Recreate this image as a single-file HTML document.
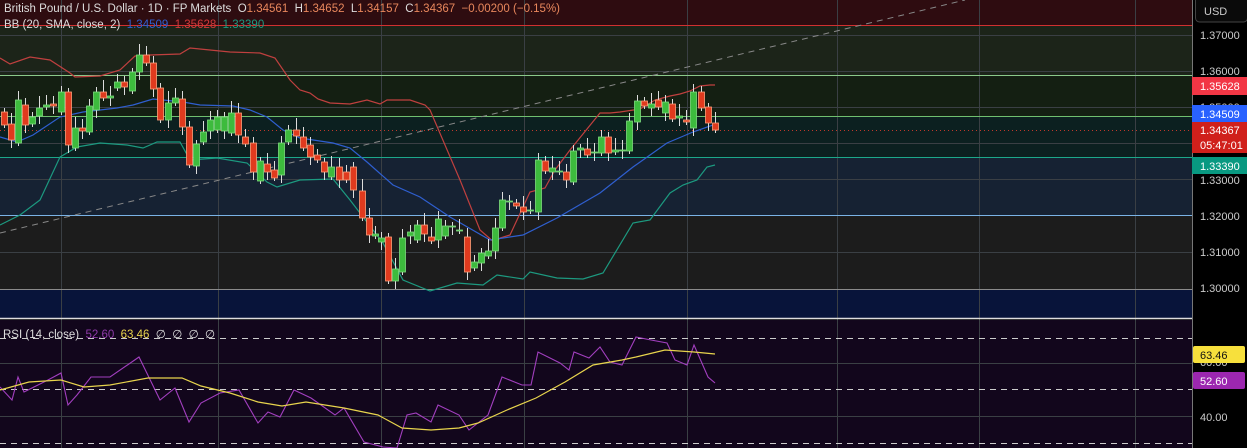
<!DOCTYPE html><html><head><meta charset="utf-8"><style>
html,body{margin:0;padding:0;background:#000;width:1247px;height:448px;overflow:hidden;font-family:"Liberation Sans",sans-serif}
svg{display:block}
text{white-space:pre}
</style></head><body>
<svg id="s" width="1247" height="448" xmlns="http://www.w3.org/2000/svg" font-family="Liberation Sans, sans-serif" xml:space="preserve">
<rect x="0" y="0" width="1192" height="25" fill="#2e0c10"/>
<rect x="0" y="25" width="1192" height="50" fill="#1c2419"/>
<rect x="0" y="75" width="1192" height="42" fill="#141f12"/>
<rect x="0" y="117" width="1192" height="40" fill="#0c2020"/>
<rect x="0" y="157" width="1192" height="58" fill="#162233"/>
<rect x="0" y="215" width="1192" height="74" fill="#1c1c1c"/>
<rect x="0" y="289" width="1192" height="29" fill="#08143a"/>
<rect x="0" y="320" width="1192" height="128" fill="#12061c"/>
<g stroke="#3a3f44" stroke-width="1">
<line x1="0" y1="35.5" x2="1192" y2="35.5"/><line x1="0" y1="71.5" x2="1192" y2="71.5"/><line x1="0" y1="107.5" x2="1192" y2="107.5"/><line x1="0" y1="143.5" x2="1192" y2="143.5"/><line x1="0" y1="179.5" x2="1192" y2="179.5"/><line x1="0" y1="252.5" x2="1192" y2="252.5"/>
<line x1="61.5" y1="0" x2="61.5" y2="448"/><line x1="218.5" y1="0" x2="218.5" y2="448"/><line x1="381.5" y1="0" x2="381.5" y2="448"/><line x1="524.5" y1="0" x2="524.5" y2="448"/><line x1="687.5" y1="0" x2="687.5" y2="448"/><line x1="837.5" y1="0" x2="837.5" y2="448"/><line x1="979.5" y1="0" x2="979.5" y2="448"/><line x1="1135.5" y1="0" x2="1135.5" y2="448"/>
<line x1="0" y1="363.5" x2="1192" y2="363.5"/><line x1="0" y1="416.5" x2="1192" y2="416.5"/>
</g>
<line x1="0" y1="25.5" x2="1192" y2="25.5" stroke="#d13030"/>
<line x1="0" y1="75.5" x2="1192" y2="75.5" stroke="#8bc98b"/>
<line x1="0" y1="116.5" x2="1192" y2="116.5" stroke="#6fbf6f"/>
<line x1="0" y1="157.5" x2="1192" y2="157.5" stroke="#1ca88a"/>
<line x1="0" y1="215.5" x2="1192" y2="215.5" stroke="#7ab3e6"/>
<line x1="0" y1="289.5" x2="1192" y2="289.5" stroke="#8a8a8a"/>
<line x1="0" y1="233" x2="965" y2="0" stroke="#888" stroke-dasharray="6,5"/>
<line x1="0" y1="130.5" x2="1192" y2="130.5" stroke="#c0392b" stroke-dasharray="1,3"/>
<line x1="0" y1="318.5" x2="1247" y2="318.5" stroke="#ddd" stroke-width="1.5"/>
<g stroke="#ccc" stroke-dasharray="6,5"><line x1="0" y1="338.5" x2="1192" y2="338.5"/><line x1="0" y1="389.5" x2="1192" y2="389.5"/><line x1="0" y1="443.5" x2="1192" y2="443.5"/></g>
<polyline fill="none" stroke="#c0403f" stroke-width="1.2" points="0,58 10,64 30,57 50,60 70,73 75,77 100,76 120,70 135,56 150,55 180,54 190,48 230,52 260,53 275,58 290,80 300,90 310,93 318,99 330,103 350,104 367,100 380,104 387,100 410,100 425,105 430,110 460,180 480,230 495,243 500,238 510,235 530,192 545,188 555,170 570,150 600,113 610,113 620,112 640,109 655,100 670,96 680,94 690,91 700,86 710,85 715,85"/>
<polyline fill="none" stroke="#2f5fd0" stroke-width="1.2" points="0,137 17,142 33,135 60,117 83,112 100,110 117,108 133,105 153,99 183,102 200,105 233,106 250,110 267,117 283,130 300,138 333,143 350,148 367,162 393,185 420,197 450,217 490,240 523,235 557,218 600,193 633,167 667,143 693,132 713,125"/>
<polyline fill="none" stroke="#1c9a80" stroke-width="1.2" points="0,225 20,215 40,200 60,157 77,147 100,143 127,145 143,148 157,142 180,142 190,160 217,158 247,163 267,182 277,187 300,180 333,179 350,200 383,243 403,280 430,291 457,283 483,285 497,275 523,279 530,272 557,278 583,279 603,273 633,223 650,220 670,193 683,185 697,180 707,167 715,165"/>
<g id="c"></g>
<polyline fill="none" stroke="#a23fbf" stroke-width="1.1" points="0,387 12,400 18,377 24,392 48,380 61,373 68,405 77,395 91,377 110,377 139,357 160,400 175,388 189,422 201,403 220,393 239,390 258,423 268,412 280,417 294,390 311,398 335,415 344,408 364,442 383,447 397,448 407,415 416,413 431,422 438,405 459,415 469,430 488,415 502,377 522,385 531,385 538,352 560,363 569,370 574,352 589,358 600,347 610,362 622,365 636,337 651,340 667,343 675,360 687,365 694,345 708,377 715,383"/>
<polyline fill="none" stroke="#e8d44d" stroke-width="1.2" points="0,390 29,382 61,380 84,387 110,385 148,378 182,378 201,386 230,393 258,402 282,406 306,402 344,408 378,415 402,428 431,430 459,428 478,423 507,410 536,398 565,382 593,365 622,360 636,357 665,350 694,352 715,354"/>
<g font-size="11.5">
<text x="4" y="12" fill="#ddd">British Pound / U.S. Dollar · 1D · FP Markets  O<tspan fill="#e8875c">1.34561</tspan>  H<tspan fill="#e8875c">1.34652</tspan>  L<tspan fill="#e8875c">1.34157</tspan>  C<tspan fill="#e8875c">1.34367</tspan>  <tspan fill="#e8875c">−0.00200 (−0.15%)</tspan></text>
<text x="4" y="28" fill="#ddd">BB (20, SMA, close, 2)  <tspan fill="#2f5fd0">1.34509</tspan>  <tspan fill="#d23a3a">1.35628</tspan>  <tspan fill="#1c9a80">1.33390</tspan></text>
<text x="3" y="338" fill="#ddd">RSI (14, close)  <tspan fill="#8e3aa8">52.60</tspan>  <tspan fill="#e8d44d">63.46</tspan>  ∅  ∅  ∅  ∅</text>
</g>
<rect x="1192" y="0" width="55" height="448" fill="#000"/>
<line x1="1192.5" y1="0" x2="1192.5" y2="448" stroke="#777"/>
<rect x="1195.5" y="-4" width="52" height="26" rx="4" fill="#0a0a0a" stroke="#444"/>
<g font-size="11" fill="#ccc">
<text x="1204" y="15">USD</text>
<text x="1200" y="39">1.37000</text><text x="1200" y="75">1.36000</text><text x="1200" y="111">1.35000</text><text x="1200" y="184">1.33000</text><text x="1200" y="220">1.32000</text><text x="1200" y="256">1.31000</text><text x="1200" y="292">1.30000</text>
<text x="1200" y="366">60.00</text><text x="1200" y="421">40.00</text>
</g>
<rect x="1192" y="77" width="55" height="18" fill="#f23645"/>
<rect x="1192" y="105" width="55" height="17" fill="#2962ff"/>
<rect x="1192" y="122" width="55" height="31" fill="#d0201b"/>
<rect x="1192" y="157" width="55" height="17" fill="#089981"/>
<rect x="1193" y="346" width="52" height="17" rx="2" fill="#f7e03c"/>
<rect x="1193" y="372" width="52" height="17" rx="2" fill="#9c27b0"/>
<g font-size="11" fill="#fff">
<text x="1200" y="90">1.35628</text><text x="1200" y="118">1.34509</text><text x="1200" y="134">1.34367</text><text x="1200" y="149">05:47:01</text><text x="1200" y="170">1.33390</text>
<text x="1200" y="359" fill="#111">63.46</text><text x="1200" y="385">52.60</text>
</g>
</svg>
<script>
var d=[[4,'r',112,125],[11,'r',124,140],[18,'g',100,143],[25,'r',105,125],[32,'g',117,124],[39,'g',108,116],[46,'g',105,107],[53,'r',104,106],[61,'g',92,112],[68,'r',92,145],[75,'g',128,148],[82,'r',128,131],[89,'g',106,132],[96,'g',92,110],[103,'r',92,98],[110,'g',96,98],[117,'g',82,88],[124,'r',82,87],[132,'g',72,91],[139,'g',55,72],[146,'r',55,63],[153,'r',63,89],[160,'r',88,120],[168,'g',103,120],[175,'g',98,103],[182,'r',99,127],[189,'r',127,165],[196,'g',144,166],[203,'g',132,142],[210,'g',120,131],[217,'g',117,130],[224,'g',117,131],[231,'g',113,133],[238,'r',113,135],[245,'r',137,144],[253,'r',143,172],[260,'g',161,181],[267,'r',164,172],[274,'r',170,178],[281,'g',143,175],[288,'g',130,142],[296,'r',130,136],[303,'r',137,148],[310,'r',145,157],[317,'r',155,160],[324,'r',162,172],[331,'g',167,177],[339,'r',167,180],[346,'r',172,180],[353,'r',167,190],[362,'r',191,218],[369,'r',218,235],[375,'g',234,236],[381,'g',238,242],[388,'r',237,281],[395,'g',269,281],[402,'g',238,272],[410,'g',232,236],[417,'g',225,240],[424,'r',225,234],[431,'r',237,241],[438,'g',219,240],[445,'g',226,236],[452,'g',226,227],[459,'g',230,231],[467,'r',237,272],[474,'g',262,268],[481,'g',253,263],[488,'g',251,256],[495,'g',228,251],[502,'g',200,228],[509,'g',201,202],[516,'r',203,206],[523,'r',207,212],[530,'g',210,211],[538,'g',160,212],[545,'r',161,171],[552,'g',168,172],[559,'g',171,172],[566,'r',172,180],[573,'g',151,182],[580,'g',148,150],[587,'r',149,155],[594,'g',152,153],[601,'g',137,153],[608,'r',137,153],[615,'g',150,152],[622,'g',150,151],[629,'g',121,151],[637,'g',101,122],[644,'r',101,106],[651,'g',104,108],[658,'r',100,107],[665,'g',102,113],[672,'r',104,119],[679,'g',116,118],[686,'r',120,122],[693,'g',92,128],[701,'r',92,108],[708,'r',107,123],[715,'r',123,130]];
var g=document.getElementById('c'),h='';
d.forEach(function(c,i){var w1=4+(i*7)%9,w2=3+(i*5)%10;
h+='<line x1="'+(c[0]+.5)+'" y1="'+(c[2]-w1)+'" x2="'+(c[0]+.5)+'" y2="'+(c[3]+w2)+'" stroke="#ddd" stroke-width="1"/>';
var col=c[1]=='g'?'#3dbb3d':'#e03a1e',st=c[1]=='g'?'#7fdc7f':'#ffa07a';
h+='<rect x="'+(c[0]-2.5)+'" y="'+c[2]+'" width="6" height="'+Math.max(1,c[3]-c[2])+'" fill="'+col+'" stroke="'+st+'" stroke-width="0.8"/>';});
g.innerHTML=h;
</script>
</body></html>
